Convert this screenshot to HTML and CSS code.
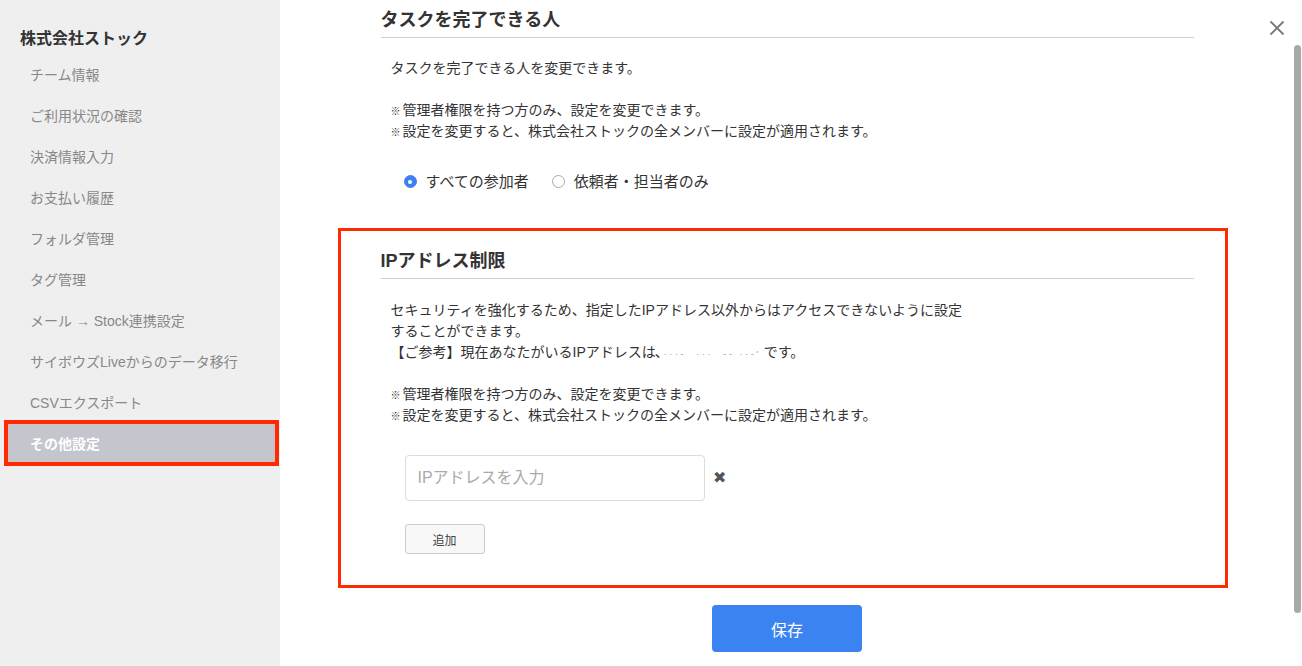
FILE: index.html
```html
<!DOCTYPE html>
<html lang="ja">
<head>
<meta charset="utf-8">
<title>その他設定</title>
<link rel="stylesheet" href="styles.css">
</head>
<body>
<div class="layout">
  <aside class="sidebar">
    <div class="team">株式会社ストック</div>
    <ul class="menu">
      <li class="item">チーム情報</li>
      <li class="item">ご利用状況の確認</li>
      <li class="item">決済情報入力</li>
      <li class="item">お支払い履歴</li>
      <li class="item">フォルダ管理</li>
      <li class="item">タグ管理</li>
      <li class="item">メール → Stock連携設定</li>
      <li class="item">サイボウズLiveからのデータ移行</li>
      <li class="item">CSVエクスポート</li>
      <li class="item active">その他設定</li>
    </ul>
  </aside>
  <main class="main">
    <div class="content">
      <section class="section">
        <h2 class="heading">タスクを完了できる人</h2>
        <p class="desc">タスクを完了できる人を変更できます。<br><br><span class="mark">※</span>管理者権限を持つ方のみ、設定を変更できます。<br><span class="mark">※</span>設定を変更すると、株式会社ストックの全メンバーに設定が適用されます。</p>
        <div class="radios">
          <label class="radio"><span class="dot checked"></span>すべての参加者</label>
          <label class="radio"><span class="dot"></span>依頼者・担当者のみ</label>
        </div>
      </section>
      <section class="section highlight">
        <h2 class="heading">IPアドレス制限</h2>
        <p class="desc">セキュリティを強化するため、指定したIPアドレス以外からはアクセスできないように設定<br>することができます。<br>【ご参考】現在あなたがいるIPアドレス<span class="narrow">は、</span><span class="redacted">···‐  ···  ‐‐ ··‐'</span>です。<br><br><span class="mark">※</span>管理者権限を持つ方のみ、設定を変更できます。<br><span class="mark">※</span>設定を変更すると、株式会社ストックの全メンバーに設定が適用されます。</p>
        <div class="ip-row">
          <input class="ip-input" type="text" placeholder="IPアドレスを入力">
          <span class="remove">✖</span>
        </div>
        <button class="add-btn">追加</button>
      </section>
      <div class="save-wrap"><button class="save-btn">保存</button></div>
    </div>
  </main>
</div>
<div class="close"><svg width="16" height="16" viewBox="0 0 16 16"><path d="M1.5 1.5 L14.5 14.5 M14.5 1.5 L1.5 14.5" stroke="#777" stroke-width="1.8" fill="none"/></svg></div>
<div class="scrollbar"></div>
</body>
</html>
```
FILE: styles.css
```css
* { box-sizing: border-box; }
html, body { margin: 0; padding: 0; height: 100%; overflow: hidden; }
body {
  font-family: "Liberation Sans", "Noto Sans CJK JP", sans-serif;
  color: #333;
  background: #fff;
}
.layout { display: flex; height: 666px; }
.sidebar {
  width: 280px;
  flex: none;
  background: #efefef;
  padding-top: 27px;
}
.team {
  font-size: 16px;
  font-weight: bold;
  line-height: 24px;
  padding-left: 20px;
  color: #333;
}
.menu { list-style: none; margin: 4px 0 0; padding: 0; }
.item {
  height: 41px;
  line-height: 41px;
  font-size: 14px;
  color: #888;
  padding-left: 30px;
  white-space: nowrap;
}
.item.active {
  margin: -4px 1px 0 4px;
  height: 46px;
  line-height: 40px;
  border: 4px solid #ff2a00;
  background: #c4c5cd;
  color: #fff;
  font-weight: bold;
  padding-left: 22px;
}
.main { flex: 1; display: flex; justify-content: center; padding-right: 8px; }
.content { width: 813px; padding-top: 7px; }
.heading {
  margin: 0;
  font-size: 18px;
  font-weight: bold;
  line-height: 26px;
  padding-bottom: 4px;
  border-bottom: 1px solid #cfcfcf;
  color: #333;
}
.desc {
  margin: 20px 0 0;
  padding-left: 10px;
  font-size: 14px;
  line-height: 21px;
  color: #333;
  white-space: nowrap;
}
.highlight .desc { margin-top: 21px; }
.mark { font-size: 10px; margin-right: 2px; line-height: 1; }
.narrow { letter-spacing: -1px; }
.radios { display: flex; gap: 23px; margin: 29px 0 0 23px; font-size: 15px; line-height: 21px; }
.radio { display: flex; align-items: center; color: #333; }
.dot {
  width: 13px; height: 13px;
  border-radius: 50%;
  border: 1px solid #aaa;
  background: #fff;
  margin-right: 9px;
  position: relative;
}
.dot.checked { background: #3b82f0; border-color: #3b82f0; }
.dot.checked::after {
  content: "";
  position: absolute;
  width: 4px; height: 4px;
  border-radius: 50%;
  background: #fff;
  left: 3.5px; top: 3.5px;
}
.highlight {
  margin: 36px -34px 0 -43px;
  border: 3px solid #ff2a00;
  padding: 17px 31px 31px 40px;
}
.redacted {
  color: #999;
  font-size: 9px;
  line-height: 1;
  letter-spacing: 2.6px;
  white-space: pre;
  padding: 0 3px;
}
.ip-row { display: flex; align-items: center; margin: 29px 0 0 24px; }
.ip-input {
  width: 300px; height: 46px;
  border: 1px solid #dcdcdc;
  border-radius: 4px;
  padding: 0 12px;
  font-family: inherit;
  font-size: 16px;
  color: #333;
  outline: none;
}
.ip-input::placeholder { color: #aaa; }
.remove { margin-left: 8px; font-size: 16px; line-height: 1; color: #555; }
.add-btn {
  display: block;
  margin: 23px 0 0 24px;
  width: 80px; height: 30px;
  border: 1px solid #ccc;
  border-radius: 3px;
  background: #f8f8f8;
  font-family: inherit;
  font-size: 12px;
  color: #444;
}
.save-wrap { display: flex; justify-content: center; margin-top: 17px; }
.save-btn {
  width: 150px; height: 47px;
  border: none;
  border-radius: 4px;
  background: #3a83f1;
  color: #fff;
  font-family: inherit;
  font-size: 16px;
}
.close { position: absolute; left: 1269px; top: 20px; width: 16px; height: 16px; }
.close svg { display: block; }
.scrollbar {
  position: absolute;
  left: 1294px; top: 45px;
  width: 7px; height: 568px;
  border-radius: 4px;
  background: #a9a9a9;
}
```
